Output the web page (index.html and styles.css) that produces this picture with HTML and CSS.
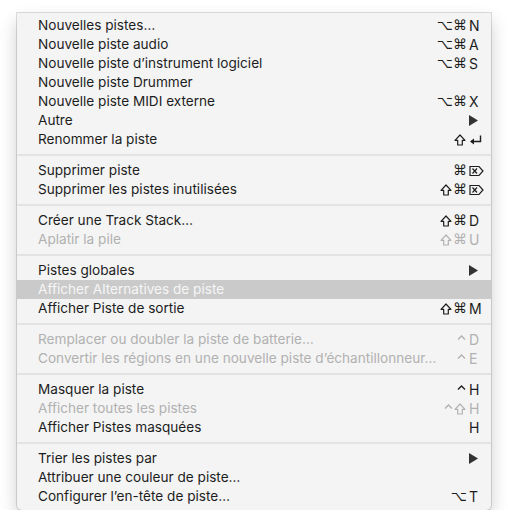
FILE: index.html
```html
<!DOCTYPE html>
<html>
<head>
<meta charset="utf-8">
<link rel="stylesheet" href="styles.css">
</head>
<body>
<div class="menu">
  <div class="row"><span class="label">Nouvelles pistes…</span><span class="sc"><span class="mods">⌥⌘</span><span class="key">N</span></span></div>
  <div class="row"><span class="label">Nouvelle piste audio</span><span class="sc"><span class="mods">⌥⌘</span><span class="key">A</span></span></div>
  <div class="row"><span class="label">Nouvelle piste d’instrument logiciel</span><span class="sc"><span class="mods">⌥⌘</span><span class="key">S</span></span></div>
  <div class="row"><span class="label">Nouvelle piste Drummer</span></div>
  <div class="row"><span class="label">Nouvelle piste MIDI externe</span><span class="sc"><span class="mods">⌥⌘</span><span class="key">X</span></span></div>
  <div class="row"><span class="label">Autre</span><span class="sc"><span class="key"><svg class="arrow" width="9" height="11" viewBox="0 0 9 11"><path d="M0 0 L9 5.5 L0 11 Z"/></svg></span></span></div>
  <div class="row"><span class="label">Renommer la piste</span><span class="sc"><span class="mods"><svg class="shift" width="12" height="12" viewBox="0 0 12 12"><path d="M6 1 L11 6.3 H8.3 V11 H3.7 V6.3 H1 Z" fill="none" stroke="currentColor" stroke-width="1.2" stroke-linejoin="round"/></svg></span><span class="key"><svg class="glyph" width="13" height="12" viewBox="0 0 13 12"><path d="M11.5 1.5 V7.5 H2" fill="none" stroke="currentColor" stroke-width="1.4"/><path d="M1 7.5 L5 4.5 V10.5 Z" fill="currentColor"/></svg></span></span></div>
  <div class="sep"></div>
  <div class="row"><span class="label">Supprimer piste</span><span class="sc"><span class="mods">⌘</span><span class="key"><svg class="glyph del" width="15" height="12" viewBox="0 0 15 12"><path d="M1 1.5 H10 L14 6 L10 10.5 H1 Z" fill="none" stroke="currentColor" stroke-width="1.2"/><path d="M3.5 3.5 L8 8.5 M8 3.5 L3.5 8.5" stroke="currentColor" stroke-width="1.2"/></svg></span></span></div>
  <div class="row"><span class="label">Supprimer les pistes inutilisées</span><span class="sc"><span class="mods"><svg class="shift" width="12" height="12" viewBox="0 0 12 12"><path d="M6 1 L11 6.3 H8.3 V11 H3.7 V6.3 H1 Z" fill="none" stroke="currentColor" stroke-width="1.2" stroke-linejoin="round"/></svg>⌘</span><span class="key"><svg class="glyph del" width="15" height="12" viewBox="0 0 15 12"><path d="M1 1.5 H10 L14 6 L10 10.5 H1 Z" fill="none" stroke="currentColor" stroke-width="1.2"/><path d="M3.5 3.5 L8 8.5 M8 3.5 L3.5 8.5" stroke="currentColor" stroke-width="1.2"/></svg></span></span></div>
  <div class="sep"></div>
  <div class="row"><span class="label">Créer une Track Stack…</span><span class="sc"><span class="mods"><svg class="shift" width="12" height="12" viewBox="0 0 12 12"><path d="M6 1 L11 6.3 H8.3 V11 H3.7 V6.3 H1 Z" fill="none" stroke="currentColor" stroke-width="1.2" stroke-linejoin="round"/></svg>⌘</span><span class="key">D</span></span></div>
  <div class="row disabled"><span class="label">Aplatir la pile</span><span class="sc"><span class="mods"><svg class="shift" width="12" height="12" viewBox="0 0 12 12"><path d="M6 1 L11 6.3 H8.3 V11 H3.7 V6.3 H1 Z" fill="none" stroke="currentColor" stroke-width="1.2" stroke-linejoin="round"/></svg>⌘</span><span class="key">U</span></span></div>
  <div class="sep"></div>
  <div class="row"><span class="label">Pistes globales</span><span class="sc"><span class="key"><svg class="arrow" width="9" height="11" viewBox="0 0 9 11"><path d="M0 0 L9 5.5 L0 11 Z"/></svg></span></span></div>
  <div class="row selected"><span class="label">Afficher Alternatives de piste</span></div>
  <div class="row"><span class="label">Afficher Piste de sortie</span><span class="sc"><span class="mods"><svg class="shift" width="12" height="12" viewBox="0 0 12 12"><path d="M6 1 L11 6.3 H8.3 V11 H3.7 V6.3 H1 Z" fill="none" stroke="currentColor" stroke-width="1.2" stroke-linejoin="round"/></svg>⌘</span><span class="key">M</span></span></div>
  <div class="sep"></div>
  <div class="row disabled"><span class="label">Remplacer ou doubler la piste de batterie…</span><span class="sc"><span class="mods"><svg class="ctrl" width="9" height="12" viewBox="0 0 9 12"><path d="M1 5.5 L4.5 2 L8 5.5" fill="none" stroke="currentColor" stroke-width="1.3"/></svg></span><span class="key">D</span></span></div>
  <div class="row disabled"><span class="label">Convertir les régions en une nouvelle piste d’échantillonneur…</span><span class="sc"><span class="mods"><svg class="ctrl" width="9" height="12" viewBox="0 0 9 12"><path d="M1 5.5 L4.5 2 L8 5.5" fill="none" stroke="currentColor" stroke-width="1.3"/></svg></span><span class="key">E</span></span></div>
  <div class="sep"></div>
  <div class="row"><span class="label">Masquer la piste</span><span class="sc"><span class="mods"><svg class="ctrl" width="9" height="12" viewBox="0 0 9 12"><path d="M1 5.5 L4.5 2 L8 5.5" fill="none" stroke="currentColor" stroke-width="1.3"/></svg></span><span class="key">H</span></span></div>
  <div class="row disabled"><span class="label">Afficher toutes les pistes</span><span class="sc"><span class="mods"><svg class="ctrl" width="9" height="12" viewBox="0 0 9 12"><path d="M1 5.5 L4.5 2 L8 5.5" fill="none" stroke="currentColor" stroke-width="1.3"/></svg><svg class="shift" width="12" height="12" viewBox="0 0 12 12"><path d="M6 1 L11 6.3 H8.3 V11 H3.7 V6.3 H1 Z" fill="none" stroke="currentColor" stroke-width="1.2" stroke-linejoin="round"/></svg></span><span class="key">H</span></span></div>
  <div class="row"><span class="label">Afficher Pistes masquées</span><span class="sc"><span class="key">H</span></span></div>
  <div class="sep"></div>
  <div class="row"><span class="label">Trier les pistes par</span><span class="sc"><span class="key"><svg class="arrow" width="9" height="11" viewBox="0 0 9 11"><path d="M0 0 L9 5.5 L0 11 Z"/></svg></span></span></div>
  <div class="row"><span class="label">Attribuer une couleur de piste…</span></div>
  <div class="row"><span class="label">Configurer l’en-tête de piste…</span><span class="sc"><span class="mods">⌥</span><span class="key">T</span></span></div>
</div>
</body>
</html>
```

FILE: styles.css
```css
html, body {
  margin: 0;
  padding: 0;
  background: #ffffff;
}

body {
  font-family: "Inter", "Roboto", sans-serif;
  font-size: 13.6px;
  color: #1d1d1d;
}

.menu {
  margin: 13px 0 0 17px;
  width: 474px;
  box-sizing: border-box;
  padding: 3px 0 4px;
  background: #f4f4f4;
  border-radius: 0 0 5px 5px;
  box-shadow: 0 0 0 1px rgba(0, 0, 0, 0.13), 0 8px 18px rgba(0, 0, 0, 0.2);
}

.row {
  display: flex;
  align-items: center;
  height: 19px;
  padding: 0 10px 0 21px;
  white-space: nowrap;
}

.label {
  flex: 1;
  line-height: 19px;
}

.sc {
  display: flex;
  align-items: center;
  height: 19px;
}

.mods {
  display: flex;
  align-items: center;
  justify-content: flex-end;
  font-family: "DejaVu Sans", sans-serif;
  font-size: 14px;
  line-height: 19px;
}

.shift, .ctrl {
  flex: none;
  margin-right: 1px;
}

.key {
  width: 12px;
  margin-left: 2px;
  display: flex;
  align-items: center;
  line-height: 19px;
  font-size: 14px;
}

.arrow {
  fill: #333333;
}

.glyph {
  flex: none;
}

.disabled {
  color: #b1b1b1;
}

.selected {
  background: #cacaca;
  color: #f6f6f6;
}

.sep {
  height: 2px;
  margin: 5px 0;
  background: #e3e3e3;
}
```
